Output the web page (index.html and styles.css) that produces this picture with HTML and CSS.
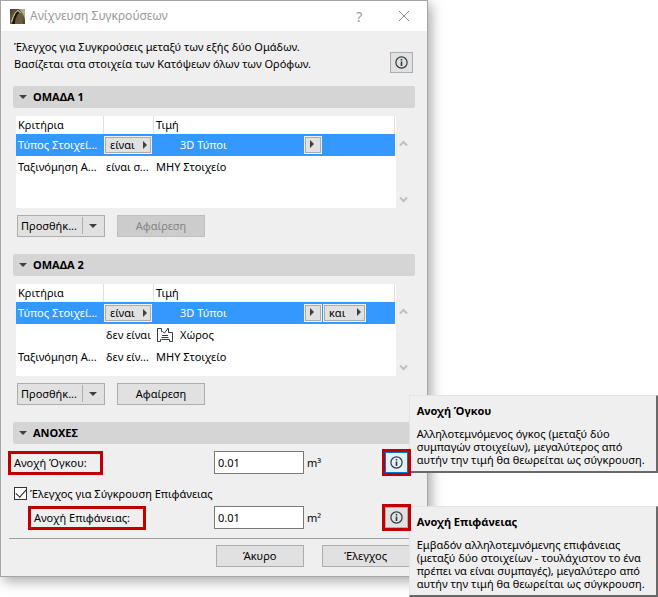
FILE: index.html
```html
<!DOCTYPE html>
<html lang="el">
<head>
  <meta charset="UTF-8">
  <title>Ανίχνευση Συγκρούσεων</title>
  <link rel="stylesheet" href="styles.css">
</head>
<body>
  <div class="dialog">
    <header class="titlebar">
      <svg class="app-icon" width="15" height="15" viewBox="0 0 15 15">
        <defs>
          <linearGradient id="gold" x1="0" y1="0" x2="1" y2="1">
            <stop offset="0" stop-color="#4a3c28"/>
            <stop offset="0.55" stop-color="#75674b"/>
            <stop offset="1" stop-color="#4c3d25"/>
          </linearGradient>
        </defs>
        <rect width="15" height="15" fill="url(#gold)"/>
        <path d="M9 0h6v11C14 6 12 3 9 0z" fill="#b5aa94"/>
        <path d="M2 15C3 9 5 4 8 2c3 2 5 7 5 13z" fill="#6b5c3f"/>
        <path d="M2 15C3 9 5 4 8 2l1 2C6 7 5 11 5 15z" fill="#1f180e"/>
        <path d="M1.500 13C3 8 5 3 8 1.500c1 .5 2 1.500 2.500 2.500" fill="none" stroke="#d8cfbb"/>
      </svg>
      <h1>Ανίχνευση Συγκρούσεων</h1>
      <button class="win-btn" aria-label="Βοήθεια">?</button>
      <button class="win-btn" aria-label="Κλείσιμο">
        <svg width="12" height="12" viewBox="0 0 12 12"><path d="M1 1l10 10M11 1L1 11" stroke="#8a8a8a" fill="none"/></svg>
      </button>
    </header>

    <div class="intro">
      <p>Έλεγχος για Συγκρούσεις μεταξύ των εξής δύο Ομάδων.<br>Βασίζεται στα στοιχεία των Κατόψεων όλων των Ορόφων.</p>
      <button class="info-btn" aria-label="Πληροφορίες">
        <svg width="13" height="13" viewBox="0 0 13 13"><circle cx="6.5" cy="6.5" r="5.6" fill="none" stroke="#2f3a40" stroke-width="1.2"/><path d="M5.7 3h1.6v1.5H5.7zM5.7 5.5h1.6V10H5.7z" fill="#2f3a40"/></svg>
      </button>
    </div>

    <section>
      <h2><span class="tri-down"></span>ΟΜΑΔΑ 1</h2>
      <div class="list">
        <div class="list-box">
          <table>
            <thead>
              <tr><th class="col-crit">Κριτήρια</th><th class="col-op"></th><th>Τιμή</th></tr>
            </thead>
            <tbody>
              <tr class="selected">
                <td>Τύπος Στοιχεί...</td>
                <td class="op"><button class="pop-btn">είναι<span class="tri-right"></span></button></td>
                <td>
                  <div class="value">
                    <span class="value-name">3D Τύποι</span>
                    <button class="pop-btn small" aria-label="Επιλογή"><span class="tri-right"></span></button>
                  </div>
                </td>
              </tr>
              <tr><td>Ταξινόμηση Α...</td><td>είναι σ...</td><td>ΜΗΥ Στοιχείο</td></tr>
            </tbody>
          </table>
        </div>
        <div class="scroll">
          <svg width="9" height="7" viewBox="0 0 9 7"><path d="M1 5.5l3.5-3.5L8 5.5" fill="none" stroke="#bfbfbf" stroke-width="2"/></svg>
          <svg width="9" height="7" viewBox="0 0 9 7"><path d="M1 1.500L4.500 5 8 1.500" fill="none" stroke="#bfbfbf" stroke-width="2"/></svg>
        </div>
      </div>
      <div class="actions">
        <button class="btn split"><span>Προσθήκ...</span><i class="tri-down"></i></button>
        <button class="btn" disabled>Αφαίρεση</button>
      </div>
    </section>

    <section>
      <h2><span class="tri-down"></span>ΟΜΑΔΑ 2</h2>
      <div class="list">
        <div class="list-box">
          <table>
            <thead>
              <tr><th class="col-crit">Κριτήρια</th><th class="col-op"></th><th>Τιμή</th></tr>
            </thead>
            <tbody>
              <tr class="selected">
                <td>Τύπος Στοιχεί...</td>
                <td class="op"><button class="pop-btn">είναι<span class="tri-right"></span></button></td>
                <td>
                  <div class="value">
                    <span class="value-name">3D Τύποι</span>
                    <button class="pop-btn small" aria-label="Επιλογή"><span class="tri-right"></span></button>
                    <button class="pop-btn and">και<span class="tri-right"></span></button>
                  </div>
                </td>
              </tr>
              <tr>
                <td></td>
                <td>δεν είναι</td>
                <td>
                  <div class="value">
                    <svg class="zone-icon" width="17" height="14" viewBox="0 0 17 14"><path d="M4.500 3.500V.5h-4v13h3v-2h1M4.500 3.500h1l2 1.500L10.500 1V.5h1v4h4v9h-3v-2M5 7.500h6M4.500 9.500h7M4.500 11.500h8" fill="none" stroke="#333b40"/></svg>
                    <span>Χώρος</span>
                  </div>
                </td>
              </tr>
              <tr><td>Ταξινόμηση Α...</td><td>δεν είν...</td><td>ΜΗΥ Στοιχείο</td></tr>
            </tbody>
          </table>
        </div>
        <div class="scroll">
          <svg width="9" height="7" viewBox="0 0 9 7"><path d="M1 5.5l3.5-3.5L8 5.5" fill="none" stroke="#bfbfbf" stroke-width="2"/></svg>
          <svg width="9" height="7" viewBox="0 0 9 7"><path d="M1 1.500L4.500 5 8 1.500" fill="none" stroke="#bfbfbf" stroke-width="2"/></svg>
        </div>
      </div>
      <div class="actions">
        <button class="btn split"><span>Προσθήκ...</span><i class="tri-down"></i></button>
        <button class="btn">Αφαίρεση</button>
      </div>
    </section>

    <section class="tolerances">
      <h2><span class="tri-down"></span>ΑΝΟΧΕΣ</h2>
      <div class="field">
        <div class="field-label"><label class="marked" for="volume">Ανοχή Όγκου:</label></div>
        <input class="number" type="text" id="volume" value="0.01">
        <span class="unit">m³</span>
        <div class="help">
          <div class="tooltip above">
            <h3>Ανοχή Όγκου</h3>
            <p>Αλληλοτεμνόμενος όγκος (μεταξύ δύο<br>συμπαγών στοιχείων), μεγαλύτερος από<br>αυτήν την τιμή θα θεωρείται ως σύγκρουση.</p>
          </div>
          <button class="info-btn marked-btn active" aria-label="Ανοχή Όγκου">
            <svg width="13" height="13" viewBox="0 0 13 13"><circle cx="6.5" cy="6.5" r="5.6" fill="none" stroke="#2f3a40" stroke-width="1.2"/><path d="M5.7 3h1.6v1.5H5.7zM5.7 5.5h1.6V10H5.7z" fill="#2f3a40"/></svg>
          </button>
        </div>
      </div>
      <div class="check">
        <input type="checkbox" id="surface-check" checked>
        <label for="surface-check">Έλεγχος για Σύγκρουση Επιφάνειας</label>
      </div>
      <div class="field">
        <div class="field-label indent"><label class="marked" for="surface">Ανοχή Επιφάνειας:</label></div>
        <input class="number" type="text" id="surface" value="0.01">
        <span class="unit">m²</span>
        <div class="help">
          <div class="tooltip">
            <h3>Ανοχή Επιφάνειας</h3>
            <p>Εμβαδόν αλληλοτεμνόμενης επιφάνειας<br>(μεταξύ δύο στοιχείων - τουλάχιστον το ένα<br>πρέπει να είναι συμπαγές), μεγαλύτερο από<br>αυτήν την τιμή θα θεωρείται ως σύγκρουση.</p>
          </div>
          <button class="info-btn marked-btn" aria-label="Ανοχή Επιφάνειας">
            <svg width="13" height="13" viewBox="0 0 13 13"><circle cx="6.5" cy="6.5" r="5.6" fill="none" stroke="#2f3a40" stroke-width="1.2"/><path d="M5.7 3h1.6v1.5H5.7zM5.7 5.5h1.6V10H5.7z" fill="#2f3a40"/></svg>
          </button>
        </div>
      </div>
    </section>

    <footer>
      <button class="btn">Άκυρο</button>
      <button class="btn">Έλεγχος</button>
    </footer>
  </div>
</body>
</html>
```
FILE: styles.css
```css
* {
  box-sizing: border-box;
}
body {
  min-height: 100vh;
  margin: 0;
  background: #fff;
  color: #000;
  font: 11px/17px "Noto Sans", "Open Sans", sans-serif;
}
h1, h2, h3, p {
  margin: 0;
}
button, input {
  font: inherit;
  color: inherit;
}
button {
  padding: 0;
}
svg {
  display: block;
  flex: none;
}

.dialog {
  width: 65%;
  background: #efefef;
  border: 1px solid #a5a5a5;
  box-shadow: 3px 4px 12px rgba(0, 0, 0, 0.35);
}
.titlebar {
  display: flex;
  align-items: center;
  height: 30px;
  padding-left: 9px;
  background: #fff;
  color: #999;
}
.titlebar h1 {
  flex: 1;
  margin-left: 5px;
  padding-bottom: 1px;
  font-size: 12px;
  font-weight: normal;
}
.win-btn {
  display: flex;
  align-items: center;
  justify-content: center;
  width: 45px;
  height: 28px;
  background: none;
  border: none;
  font-size: 14px;
}

.intro {
  display: flex;
  justify-content: space-between;
  align-items: flex-end;
  padding: 7px 14px 13px 13px;
}
.intro p {
  padding-bottom: 1px;
}
.info-btn {
  display: flex;
  align-items: center;
  justify-content: center;
  width: 23px;
  height: 21px;
  background: #e1e1e1;
  border: 1px solid #adadad;
}

section {
  padding: 0 12px;
  margin-bottom: 17px;
}
h2 {
  display: flex;
  align-items: center;
  gap: 6px;
  height: 22px;
  padding: 0 6px 1px;
  background: #d5d5d5;
  border-radius: 2px;
  font-size: 11px;
  font-weight: bold;
}
.tri-down {
  border: 4px solid transparent;
  border-top-color: #404040;
  border-bottom: none;
}
.tri-right {
  border: 4px solid transparent;
  border-left-color: #404040;
  border-right: none;
}

.list {
  display: flex;
  margin: 8px 7px 7px 3px;
}
.list-box {
  flex: 1;
  height: 92px;
  padding-right: 1px;
  background: #fff;
}
table {
  width: 100%;
  table-layout: fixed;
  border-collapse: separate;
  border-spacing: 0;
}
th, td {
  padding: 0 2px 1px;
  text-align: left;
  font-weight: normal;
  white-space: nowrap;
}
th {
  height: 18px;
  border-right: 1px solid #e0e0e0;
  line-height: 16px;
}
td {
  height: 22px;
}
.col-crit {
  width: 88px;
}
.col-op {
  width: 50px;
}
.selected {
  background: #3399ff;
  color: #fff;
}
td.op {
  padding: 0;
}
.pop-btn {
  display: flex;
  align-items: center;
  justify-content: space-between;
  width: 48px;
  height: 18px;
  padding: 0 4px 1px 5px;
  background: #e1e1e1;
  border: 1px solid #f0f0f0;
  box-shadow: inset 0 0 0 1px #adadad;
  color: #000;
  line-height: 15px;
}
.pop-btn.small {
  width: 18px;
  padding: 0 5px 1px;
}
.pop-btn.and {
  width: 43px;
  margin-left: 1px;
}
.value {
  display: flex;
  align-items: center;
}
.value-name {
  width: 148px;
  padding-left: 24px;
}
.zone-icon {
  margin: 0 6px 0 1px;
}
.scroll {
  display: flex;
  flex-direction: column;
  justify-content: space-between;
  width: 12px;
  padding: 24px 0 5px 3px;
}

.actions {
  display: flex;
  gap: 12px;
  padding-left: 4px;
}
.btn {
  width: 88px;
  height: 22px;
  padding-bottom: 1px;
  background: #e1e1e1;
  border: 1px solid #adadad;
}
.btn:disabled {
  background: #ccc;
  border-color: #bfbfbf;
  color: #838383;
}
.split {
  display: flex;
  align-items: center;
  padding: 1px 7px 2px 3px;
}
.split span {
  flex: 1;
  height: 17px;
  margin-right: 6px;
  border-right: 1px solid #adadad;
  text-align: left;
}

.tolerances {
  margin: 0 8px;
  padding: 0 4px 9px;
  border-bottom: 1px solid #a0a0a0;
}
.field {
  display: flex;
  align-items: center;
  height: 23px;
  margin-top: 7px;
  padding-right: 7px;
}
.check + .field {
  margin-top: 4px;
}
.field-label {
  width: 201px;
}
.indent {
  padding-left: 20px;
}
.marked {
  display: inline-block;
  margin-left: -2px;
  padding: 0 13px 1px 3px;
  outline: 3px solid #c00000;
}
.number {
  width: 90px;
  height: 23px;
  padding: 0 3px;
  background: #fff;
  border: 1px solid #7a7a7a;
}
.unit {
  margin-left: 3px;
}
.help {
  position: relative;
  margin-left: auto;
}
.marked-btn {
  position: relative;
  outline: 3px solid #c00000;
  z-index: 2;
}
.active {
  background: #e5f1fb;
  border-color: #0078d7;
}
.check {
  display: flex;
  align-items: center;
  gap: 3px;
  margin-top: 11px;
  padding-left: 1px;
}
.check input {
  appearance: none;
  width: 13px;
  height: 13px;
  margin: 0;
  background: #fff;
  border: 1px solid #333;
}
.check input:checked::after {
  content: "";
  display: block;
  width: 9px;
  height: 5px;
  margin: 1px;
  border: solid #222;
  border-width: 0 0 1px 1px;
  transform: rotate(-48deg);
}

.tooltip {
  position: absolute;
  top: -1px;
  left: 24px;
  z-index: 1;
  width: 249px;
  padding: 6px 6px 5px 7px;
  background: #efefef;
  border: 1px solid #e3e3e3;
  border-right: 2px solid #696969;
  border-bottom: 2px solid #696969;
  line-height: 13px;
  white-space: nowrap;
}
.tooltip.above {
  top: auto;
  bottom: 0;
}
.tooltip h3 {
  margin-bottom: 8px;
  font-size: 11px;
  line-height: 17px;
}

footer {
  display: flex;
  justify-content: flex-end;
  gap: 18px;
  padding: 6px 17px 9px;
}
```
